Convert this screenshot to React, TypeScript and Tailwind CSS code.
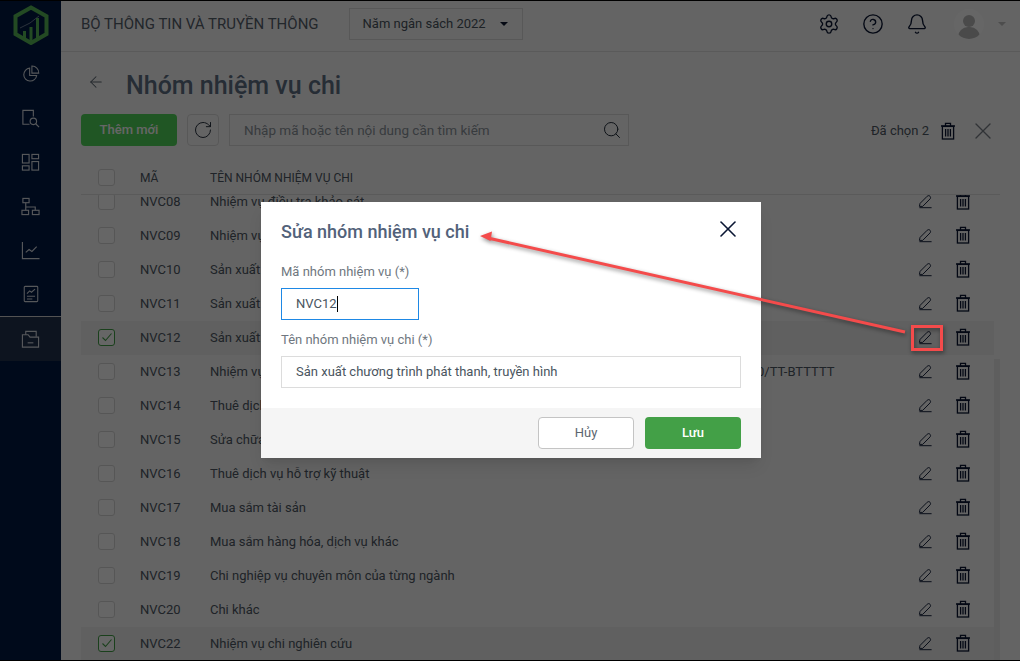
import { ArrowLeft, Bell, CircleHelp, RotateCw, Search, Settings, X } from 'lucide-react'

const rows = [
  { code: 'NVC08', name: 'Nhiệm vụ điều tra khảo sát' },
  { code: 'NVC09', name: 'Nhiệm vụ chuyên môn khác' },
  { code: 'NVC10', name: 'Sản xuất chương trình phát thanh' },
  { code: 'NVC11', name: 'Sản xuất chương trình truyền hình' },
  { code: 'NVC12', name: 'Sản xuất chương trình phát thanh, truyền hình', checked: true },
  { code: 'NVC13', name: 'Nhiệm vụ thường xuyên theo chức năng tại đơn vị sự nghiệp, theo quy định Thông tư số 03/2020/TT-BTTTTT' },
  { code: 'NVC14', name: 'Thuê dịch vụ công nghệ thông tin' },
  { code: 'NVC15', name: 'Sửa chữa tài sản' },
  { code: 'NVC16', name: 'Thuê dịch vụ hỗ trợ kỹ thuật' },
  { code: 'NVC17', name: 'Mua sắm tài sản' },
  { code: 'NVC18', name: 'Mua sắm hàng hóa, dịch vụ khác' },
  { code: 'NVC19', name: 'Chi nghiệp vụ chuyên môn của từng ngành' },
  { code: 'NVC20', name: 'Chi khác' },
  { code: 'NVC22', name: 'Nhiệm vụ chi nghiên cứu', checked: true },
]

function TrashIcon({ className }: { className?: string }) {
  return (
    <svg viewBox="0 0 16 18" fill="none" stroke="currentColor" strokeWidth="1.3" className={className}>
      <path d="M1 4h14M5.5 3.6V1.4h5v2.2" />
      <rect x="2.4" y="4.4" width="11.2" height="12.6" />
      <path d="M5.6 7v7.6M8 7v7.6M10.4 7v7.6" />
    </svg>
  )
}

function PenIcon({ className }: { className?: string }) {
  return (
    <svg viewBox="0 0 16 16" fill="none" stroke="currentColor" strokeWidth="1" className={className}>
      <path d="M1.5 13.2l.7-3.2 7.6-7.6c1-.9 2.2-.9 3 0 .8.9.8 2 0 2.9L5 13.2z" />
      <path d="M1.5 14.6h13" />
    </svg>
  )
}

function Logo() {
  return (
    <svg viewBox="0 0 36 40" className="h-10 w-9" fill="none">
      <path d="M18 2.5L33.5 11.2V29L18 38 2.5 29V11.2z" stroke="#58b858" strokeWidth="4" />
      <rect x="10" y="26" width="3" height="8" fill="#58b858" />
      <rect x="16.5" y="22" width="3" height="14" fill="#58b858" />
      <rect x="23" y="13" width="3" height="20" fill="#58b858" />
      <path d="M7 23l10-5 9-7" stroke="#8a94a8" strokeWidth="0.8" />
    </svg>
  )
}

const navIcons = [
  <svg viewBox="0 0 20 20" className="h-[18px] w-[18px]" fill="none" stroke="currentColor" strokeWidth="1.2"><path d="M8.5 3.5a7.2 7.2 0 1 0 7.8 8.2H8.5z" /><path d="M11 1.2a7.4 7.4 0 0 1 7.6 7.8H11z" /></svg>,
  <svg viewBox="0 0 20 20" className="h-[19px] w-[19px]" fill="none" stroke="currentColor" strokeWidth="1.2"><path d="M9 16H2V1.5h11V8" /><circle cx="13" cy="13" r="3.4" /><path d="M15.5 15.5L19 19" /></svg>,
  <svg viewBox="0 0 20 20" className="h-[19px] w-[19px]" fill="none" stroke="currentColor" strokeWidth="1.2"><rect x="1.5" y="1.5" width="7" height="9" /><rect x="11.5" y="1.5" width="7" height="4.5" /><rect x="1.5" y="13.5" width="7" height="4.5" /><rect x="11.5" y="9" width="7" height="9" /></svg>,
  <svg viewBox="0 0 20 20" className="h-[19px] w-[19px]" fill="none" stroke="currentColor" strokeWidth="1.2"><rect x="2" y="1.5" width="6.5" height="4.5" /><rect x="1" y="14" width="7" height="4.5" /><rect x="12" y="14" width="7" height="4.5" /><path d="M5 6v4.5h10V14M5 10.5V14" /></svg>,
  <svg viewBox="0 0 20 20" className="h-[19px] w-[19px]" fill="none" stroke="currentColor" strokeWidth="1.2"><path d="M1.5 1v17.5h18" /><path d="M5 12l3.5-3 3 2 5-5" /></svg>,
  <svg viewBox="0 0 20 20" className="h-[18px] w-[18px]" fill="none" stroke="currentColor" strokeWidth="1.2"><rect x="2.5" y="1.5" width="15" height="17" rx="1" /><path d="M5.5 9.5l3-3 2 1.5 4-3.5M5.5 12.5h9M5.5 15.5h6" /></svg>,
]

function Checkbox({ checked }: { checked?: boolean }) {
  return (
    <span className={`flex h-[17px] w-[17px] items-center justify-center rounded-[3px] border bg-white ${checked ? 'border-[#43a047]' : 'border-[#d8d8d8]'}`}>
      {checked && (
        <svg viewBox="0 0 12 12" className="h-3 w-3" fill="none" stroke="#43a047" strokeWidth="1.1">
          <path d="M1.5 6.5l3 3 6-7" />
        </svg>
      )}
    </span>
  )
}

export default function App() {
  return (
    <div className="relative flex h-[661px] w-[1020px] overflow-hidden bg-[#fbfbfb] font-['Roboto',sans-serif] text-[13px] text-[#4e5964]">
      <aside className="flex w-[61px] shrink-0 flex-col bg-[#001a44] text-[#d7dbe2]">
        <div className="flex h-[52px] items-center justify-center pb-[2px]"><Logo /></div>
        {navIcons.map((icon, i) => (
          <div key={i} className="flex h-11 items-center justify-center">{icon}</div>
        ))}
        <div className="flex h-[45px] items-center justify-center border-t border-[#d0d0d0] bg-[#22324f]">
          <svg viewBox="0 0 20 20" className="h-[19px] w-[19px]" fill="none" stroke="currentColor" strokeWidth="1.2">
            <path d="M1.5 18V5h6l2 2.5h9V18z" />
            <path d="M5 5V1.5h11V7" />
            <path d="M7 13.5h6" />
          </svg>
        </div>
      </aside>

      <main className="flex min-w-0 flex-1 flex-col">
        <header className="flex h-[52px] shrink-0 items-center border-b border-[#e2e2e2] pb-[3px] pl-5 pr-[14px]">
          <span className="text-[15px] text-[#56616c]">BỘ THÔNG TIN VÀ TRUYỀN THÔNG</span>
          <div className="ml-[30px] flex h-8 w-[174px] items-center justify-between border border-[#dcdcdc] pl-[13px] pr-[14px]">
            <span className="text-[#4a5560]">Năm ngân sách 2022</span>
            <span className="h-0 w-0 border-x-4 border-t-[4px] border-x-transparent border-t-[#0d1830]" />
          </div>
          <div className="ml-auto flex items-center text-[#0a1633]">
            <Settings className="h-[22px] w-[22px]" strokeWidth={1.5} />
            <CircleHelp className="ml-[22px] h-[22px] w-[22px]" strokeWidth={1.5} />
            <Bell className="ml-[22px] h-[22px] w-[22px]" strokeWidth={1.5} />
            <div className="relative ml-[26px] h-[30px] w-[30px] overflow-hidden rounded-full bg-white">
              <span className="absolute left-[9px] top-[6px] h-3 w-3 rounded-full bg-[#b9b9b9]" />
              <span className="absolute left-1 top-[18px] h-5 w-[22px] rounded-full bg-[#b9b9b9]" />
            </div>
            <span className="ml-[14px] h-0 w-0 border-x-4 border-t-[4px] border-x-transparent border-t-[#c0c0c0]" />
          </div>
        </header>

        <div className="flex min-h-0 flex-1 flex-col px-5">
          <div className="flex h-[62px] shrink-0 items-center">
            <ArrowLeft className="ml-[6px] h-[18px] w-[18px] -translate-y-[1px] text-[#5a6570]" strokeWidth={1.4} />
            <h1 className="ml-[21px] mt-[6px] text-[25px] font-medium text-[#5f7086]">Nhóm nhiệm vụ chi</h1>
          </div>

          <div className="flex h-8 shrink-0 items-center">
            <button className="h-8 w-24 rounded-[4px] bg-[#52d65a] text-[13px] font-medium text-white">Thêm mới</button>
            <button className="ml-[10px] flex h-8 w-8 items-center justify-center rounded-[4px] border border-[#dcdcdc]">
              <RotateCw className="h-5 w-5 text-[#2a3441]" strokeWidth={1.2} />
            </button>
            <div className="ml-[10px] flex h-8 w-[400px] items-center justify-between border border-[#dcdcdc] pl-[14px] pr-[6px]">
              <span className="text-[13.5px] text-[#8c949c]">Nhập mã hoặc tên nội dung cần tìm kiếm</span>
              <Search className="h-5 w-5 text-[#222d3a]" strokeWidth={1.2} />
            </div>
            <span className="ml-auto mt-[2px]">Đã chọn 2</span>
            <TrashIcon className="ml-[11px] mt-[2px] h-[18px] w-4 text-[#0a1633]" />
            <X className="ml-[13px] mr-[3px] mt-[2px] h-7 w-7 text-[#7a8088]" strokeWidth={1.2} />
          </div>

          <div className="mt-[17px] flex h-[32px] shrink-0 items-start border-b border-[#e2e2e2] text-[12px]">
            <span className="ml-[17px] mt-[6px]"><Checkbox /></span>
            <span className="ml-[25px] mt-[6px] w-[70px]">MÃ</span>
            <span className="mt-[6px]">TÊN NHÓM NHIỆM VỤ CHI</span>
          </div>

          <div className="relative min-h-0 flex-1 overflow-hidden">
            <div className="-mt-[10px] mr-[6px]">
              {rows.map((row) => (
                <div key={row.code} className={`flex h-[34px] items-center ${row.checked ? 'bg-[#efefef]' : ''}`}>
                  <span className="ml-[17px] -translate-y-px"><Checkbox checked={row.checked} /></span>
                  <span className="ml-[25px] w-[70px] shrink-0">{row.code}</span>
                  <span className="whitespace-nowrap">{row.name}</span>
                  <div className="ml-auto flex -translate-y-px items-center text-[#0a1633]">
                    <PenIcon className="h-[15px] w-[15px]" />
                    <TrashIcon className="ml-[22px] mr-[23px] h-[18px] w-4" />
                  </div>
                </div>
              ))}
            </div>
            <div className="absolute bottom-0 right-0 top-[164px] w-[6px] bg-[#ececec]" />
          </div>
        </div>
      </main>

      <div className="absolute inset-0 bg-black/60" />

      <div className="absolute left-[261px] top-[202px] w-[500px] bg-white shadow-lg">
        <div className="flex h-[60px] items-center justify-between pb-[2px] pl-5 pr-[19px]">
          <h2 className="text-[18px] font-medium text-[#52627a]">Sửa nhóm nhiệm vụ chi</h2>
          <X className="h-7 w-7 -translate-y-[2px] text-[#0a1633]" strokeWidth={1.4} />
        </div>
        <div className="px-5 pb-5 text-[#6f7780]">
          <label className="block leading-5">Mã nhóm nhiệm vụ (*)</label>
          <div className="mt-[6px] flex h-8 w-[138px] items-center border border-[#1e88e5] pl-[14px] text-[#4a5560]">
            NVC12<span className="h-4 w-px bg-black" />
          </div>
          <label className="mt-[10px] block leading-5">Tên nhóm nhiệm vụ chi (*)</label>
          <div className="mt-[6px] flex h-8 items-center border border-[#dcdcdc] pl-[14px] text-[#4a5560]">
            Sản xuất chương trình phát thanh, truyền hình
          </div>
        </div>
        <div className="flex h-[50px] items-center justify-end gap-[11px] bg-[#f5f5f5] pr-5">
          <button className="h-8 w-24 rounded-[4px] border border-[#c4c4c4] bg-white text-[13px] text-[#5c6670]">Hủy</button>
          <button className="h-8 w-24 rounded-[4px] bg-[#43a047] text-[13px] font-medium text-white">Lưu</button>
        </div>
      </div>

      <svg viewBox="0 0 1020 661" className="pointer-events-none absolute inset-0 h-[661px] w-[1020px] drop-shadow-[1px_2px_2px_rgba(0,0,0,0.45)]" fill="none">
        <path d="M905 332L490 238.5" stroke="#f44b4b" strokeWidth="3" />
        <path d="M480 236l12-4.5-1.5 9.5z" fill="#f44b4b" />
        <rect x="912.5" y="326.5" width="29" height="23" stroke="#f44b4b" strokeWidth="3" />
      </svg>

      <div className="pointer-events-none absolute inset-0 border-y border-black" />
    </div>
  )
}
